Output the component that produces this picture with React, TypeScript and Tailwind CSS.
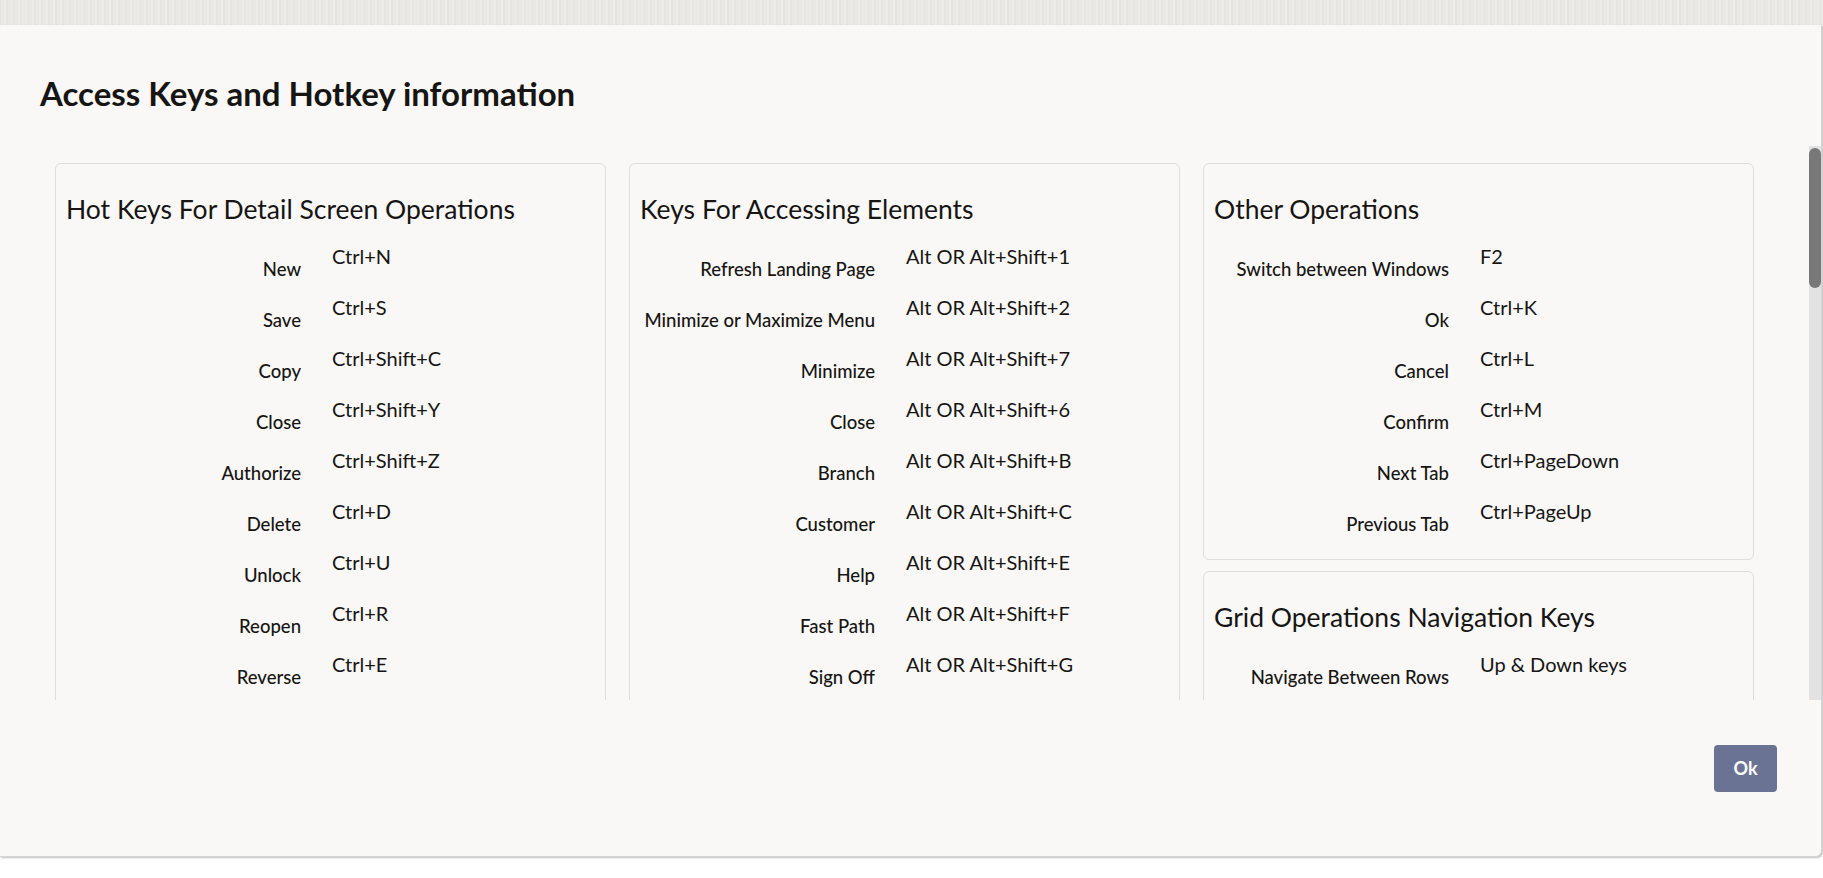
import React from "react";

type Row = [string, string];

const detail: Row[] = [
  ["New", "Ctrl+N"],
  ["Save", "Ctrl+S"],
  ["Copy", "Ctrl+Shift+C"],
  ["Close", "Ctrl+Shift+Y"],
  ["Authorize", "Ctrl+Shift+Z"],
  ["Delete", "Ctrl+D"],
  ["Unlock", "Ctrl+U"],
  ["Reopen", "Ctrl+R"],
  ["Reverse", "Ctrl+E"],
  ["Template", "Ctrl+J"],
  ["Roll-over", "Ctrl+Shift+W"],
  ["Hold", "Ctrl+Shift+H"],
  ["Print", "Ctrl+P"],
  ["Enter Query", "F7"],
  ["Execute Query", "F8"],
];

const access: Row[] = [
  ["Refresh Landing Page", "Alt OR Alt+Shift+1"],
  ["Minimize or Maximize Menu", "Alt OR Alt+Shift+2"],
  ["Minimize", "Alt OR Alt+Shift+7"],
  ["Close", "Alt OR Alt+Shift+6"],
  ["Branch", "Alt OR Alt+Shift+B"],
  ["Customer", "Alt OR Alt+Shift+C"],
  ["Help", "Alt OR Alt+Shift+E"],
  ["Fast Path", "Alt OR Alt+Shift+F"],
  ["Sign Off", "Alt OR Alt+Shift+G"],
  ["Preferences", "Alt OR Alt+Shift+P"],
  ["Dashboard", "Alt OR Alt+Shift+D"],
];

const other: Row[] = [
  ["Switch between Windows", "F2"],
  ["Ok", "Ctrl+K"],
  ["Cancel", "Ctrl+L"],
  ["Confirm", "Ctrl+M"],
  ["Next Tab", "Ctrl+PageDown"],
  ["Previous Tab", "Ctrl+PageUp"],
];

const grid: Row[] = [
  ["Navigate Between Rows", "Up & Down keys"],
  ["Navigate Between Columns", "Tab & Shift+Tab"],
  ["Select Row", "Space"],
];

function Card({ title, rows }: { title: string; rows: Row[] }) {
  return (
    <div className="w-[551px] rounded-[6px] border border-[#dfddd9] bg-[#f9f8f6] px-[10px] pt-[29px] pb-[9px]">
      <h2 className="mb-[19px] text-[26.5px] leading-[32px] font-normal text-[#161513] whitespace-nowrap">
        {title}
      </h2>
      {rows.map(([label, value]) => (
        <div key={label} className="flex h-[51px]">
          <div className="w-[235px] shrink-0 pt-[14px] text-right text-[18.5px] leading-[22px] font-medium text-[#161513] whitespace-nowrap">
            {label}
          </div>
          <div className="pl-[31px] text-[20px] leading-[24px] text-[#161513] whitespace-nowrap">
            {value}
          </div>
        </div>
      ))}
    </div>
  );
}

export default function App() {
  return (
    <div
      className="relative h-[878px] w-[1823px] overflow-hidden bg-white"
      style={{ fontFamily: "Lato, 'Noto Sans', sans-serif" }}
    >
      <div className="h-[25px] w-full bg-[#e9e7e4] bg-[repeating-linear-gradient(90deg,#e3e1dd_0px,#efedea_2px,#e6e4e0_3px,#f1efec_5px,#e4e2de_7px)]" />
      <div className="flex h-[832px] w-[1822px] flex-col rounded-br-[6px] border-r border-b border-[#d4d4d4] bg-[#f9f8f6] shadow-[1px_1px_2px_rgba(0,0,0,0.25)]">
        <h1 className="pt-[49px] pl-[40px] text-[33px] leading-[38px] font-bold text-[#161513]">
          Access Keys and Hotkey information
        </h1>
        <div className="relative mt-[34px] ml-[40px] h-[554px]">
          <div className="h-full overflow-hidden">
            <div className="flex min-h-[2192px] items-start gap-[23px] pt-[17px] pl-[15px]">
              <Card title="Hot Keys For Detail Screen Operations" rows={detail} />
              <Card title="Keys For Accessing Elements" rows={access} />
              <div className="flex flex-col gap-[11px]">
                <Card title="Other Operations" rows={other} />
                <Card title="Grid Operations Navigation Keys" rows={grid} />
              </div>
            </div>
          </div>
          <div className="absolute top-0 right-0 h-full w-[12px] bg-[#e2e2e2]">
            <div className="mt-[2px] h-[140px] w-[12px] rounded-[6px] bg-[#787878]" />
          </div>
        </div>
        <div className="flex justify-end pt-[45px] pr-[44px]">
          <button className="h-[47px] w-[63px] rounded-[4px] bg-[#6a7394] text-[18px] font-bold text-white">
            Ok
          </button>
        </div>
      </div>
    </div>
  );
}
